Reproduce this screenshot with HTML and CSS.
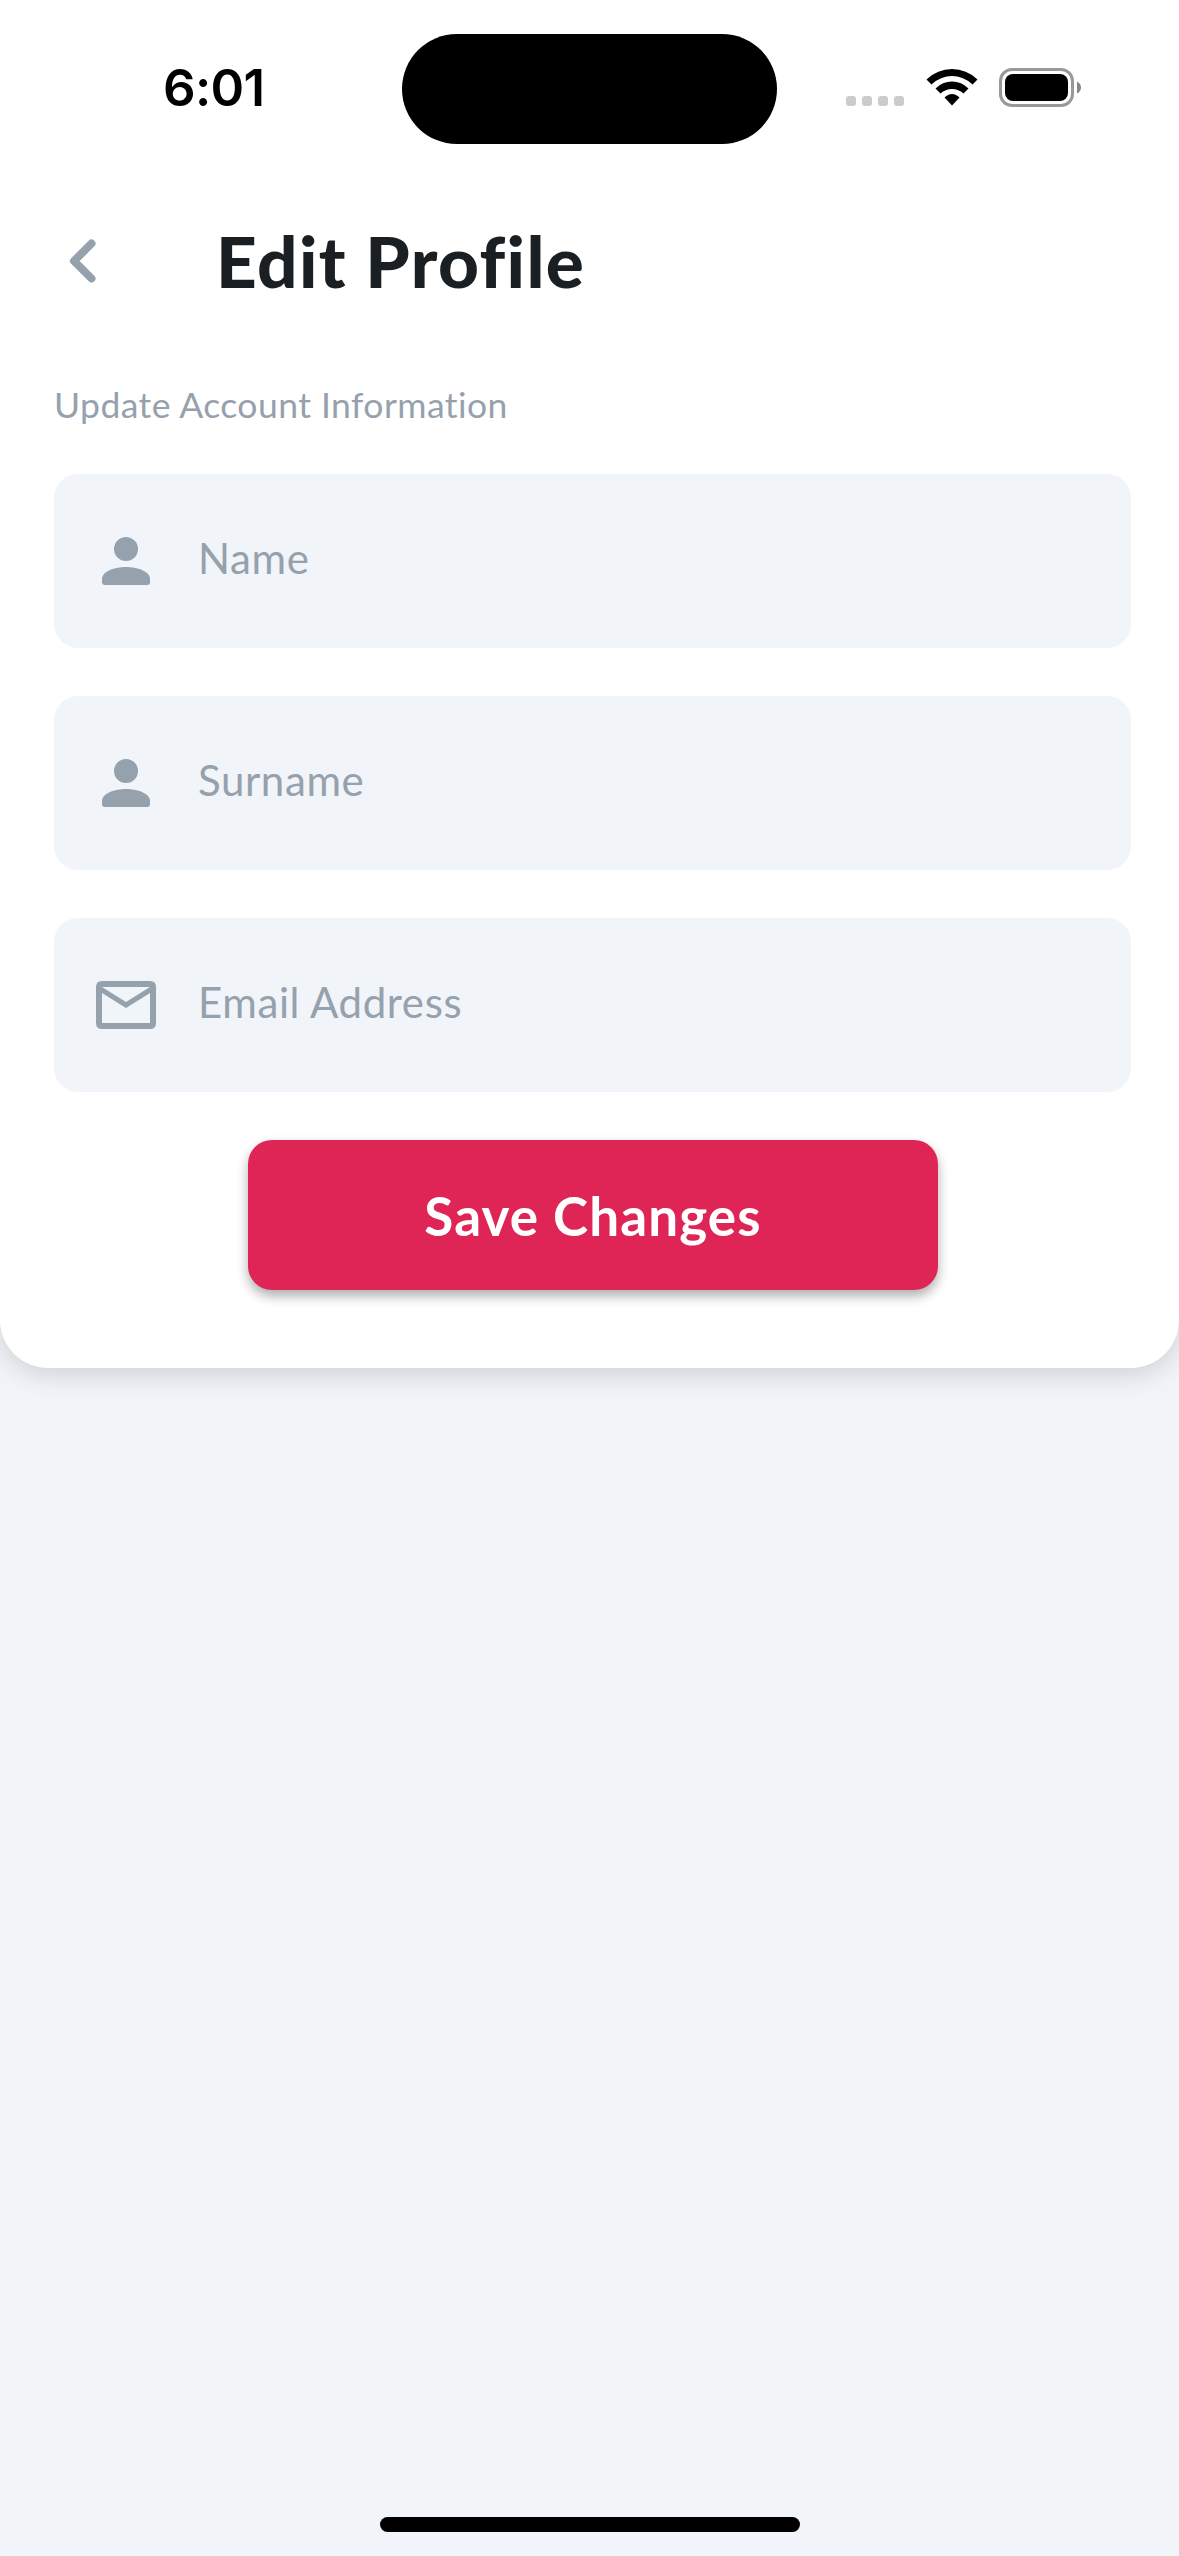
FILE: index.html
```html
<!DOCTYPE html>
<html lang="en">
<head>
<meta charset="utf-8">
<title>Edit Profile</title>
<link rel="stylesheet" href="styles.css">
</head>
<body>
<main class="screen">
  <section class="card">
    <div class="status-bar">
      <span class="time">6:01</span>
      <span class="island"></span>
      <div class="indicators">
        <span class="signal"><i></i><i></i><i></i><i></i></span>
        <svg class="wifi" width="52" height="38" viewBox="0 0 52 38">
          <path d="M0.5 11.5Q11.5 1 26 1T51.5 11.5L46.5 16.5Q37.500 8 26 8T5.500 16.500Z"/>
          <path d="M9.500 20.500Q16.500 13.500 26 13.500T42.500 20.500L37.500 25.500Q32.500 21 26 21T14.500 25.500Z"/>
          <path d="M18.500 29.500Q22 26 26 26T33.500 29.500L26 37.500Z"/>
        </svg>
        <svg class="battery" width="83" height="39" viewBox="0 0 83 39">
          <rect x="1.500" y="1.500" width="72" height="36" rx="11.500" fill="none" stroke="#999" stroke-width="3"/>
          <rect x="6" y="6" width="63" height="27" rx="8"/>
          <path d="M78 13.500Q82 15.500 82 19.500T78 25.500Z" fill="#888"/>
        </svg>
      </div>
    </div>
    <header class="header">
      <button class="back" aria-label="Back">
        <svg width="28" height="44" viewBox="0 0 28 44"><path d="M22.500 4.500L5 22L22.500 39.500"/></svg>
      </button>
      <h1 class="title">Edit Profile</h1>
    </header>
    <p class="subtitle">Update Account Information</p>
    <form class="form">
      <div class="field">
        <svg class="icon" viewBox="0 0 24 24"><circle cx="12" cy="8" r="4"/><path d="M4 18C4 15.400 8.400 14 12 14S20 15.400 20 18V19.200Q20 20 19.200 20H4.800Q4 20 4 19.200Z"/></svg>
        <span class="hint">Name</span>
      </div>
      <div class="field">
        <svg class="icon" viewBox="0 0 24 24"><circle cx="12" cy="8" r="4"/><path d="M4 18C4 15.400 8.400 14 12 14S20 15.400 20 18V19.200Q20 20 19.200 20H4.800Q4 20 4 19.200Z"/></svg>
        <span class="hint">Surname</span>
      </div>
      <div class="field">
        <svg class="icon" viewBox="0 0 24 24"><path fill-rule="evenodd" d="M4 4H20Q22 4 22 6V18Q22 20 20 20H4Q2 20 2 18V6Q2 4 4 4ZM4 6L12 11L20 6ZM4 8V18H20V8L12 13Z"/></svg>
        <span class="hint">Email Address</span>
      </div>
      <button type="button" class="save">Save Changes</button>
    </form>
  </section>
  <div class="home-indicator"></div>
</main>
</body>
</html>
```

FILE: styles.css
```css
* { box-sizing: border-box; }
body {
  margin: 0;
  background: #f1f4f8;
  font-family: Lato, "Open Sans", sans-serif;
  color: #95a1ac;
}
.screen {
  width: 1179px;
  height: 2556px;
  display: flex;
  flex-direction: column;
  justify-content: space-between;
  align-items: center;
  padding-bottom: 24px;
}
.card {
  width: 1179px;
  height: 1368px;
  background: #fff;
  border-radius: 0 0 48px 48px;
  box-shadow: 0 6px 28px rgba(0, 0, 0, 0.15);
}
.status-bar {
  height: 177px;
  display: grid;
  grid-template-columns: 402px 375px 1fr;
  align-items: start;
}
.time {
  margin: 58px 0 0 163px;
  font: 600 51px/60px Inter, sans-serif;
  letter-spacing: -0.7px;
  color: #000;
}
.island {
  height: 110px;
  margin-top: 34px;
  border-radius: 55px;
  background: #000;
}
.indicators {
  display: flex;
  align-items: flex-start;
  padding: 68px 0 0 69px;
}
.signal { display: flex; gap: 6px; padding-top: 28px; width: 80px; }
.signal i { width: 10px; height: 10px; border-radius: 3px; background: #ccc; }
.battery { margin-left: 21px; }
.header {
  height: 168px;
  display: flex;
  align-items: center;
  padding-left: 69px;
}
.back { width: 28px; height: 44px; padding: 0; border: 0; background: none; }
.back svg { display: block; fill: none; stroke: #95a1ac; stroke-width: 8; stroke-linecap: round; stroke-linejoin: round; }
.title {
  margin: 0 0 0 119px;
  font-size: 71px;
  line-height: 94px;
  font-weight: 900;
  color: #1a1f24;
  letter-spacing: 1.4px;
}
.subtitle {
  margin: 0;
  height: 129px;
  padding: 35px 0 0 54px;
  font-size: 35.500px;
  line-height: 50px;
  letter-spacing: 0.450px;
}
.form {
  width: 1077px;
  margin-left: 54px;
  display: flex;
  flex-direction: column;
  align-items: center;
  gap: 48px;
}
.field {
  width: 100%;
  height: 174px;
  display: flex;
  align-items: center;
  gap: 36px;
  padding-left: 36px;
  border-radius: 24px;
  background: #f1f4f8;
}
.icon { width: 72px; height: 72px; fill: #95a1ac; }
.hint { font-size: 42px; line-height: 54px; padding-bottom: 7px; letter-spacing: 0.6px; }
.save {
  width: 690px;
  height: 150px;
  padding: 2px 0 0 1px;
  border: 0;
  border-radius: 24px;
  background: #de2555;
  color: #fff;
  font: 700 53px/66px Lato, sans-serif;
  letter-spacing: 1.1px;
  box-shadow: 0 6px 12px rgba(0, 0, 0, 0.32);
}
.home-indicator { width: 420px; height: 15px; border-radius: 8px; background: #000; }
```
